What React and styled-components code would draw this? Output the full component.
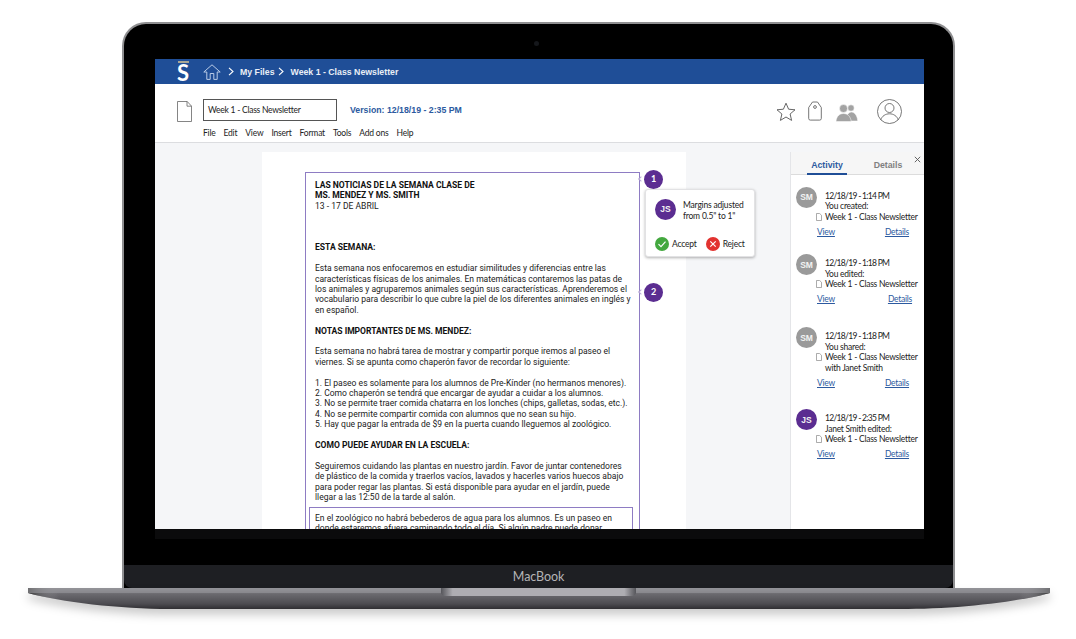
import styled, { createGlobalStyle } from "styled-components";

const GlobalStyle = createGlobalStyle`
  html, body {
    margin: 0;
    padding: 0;
    background: #fff;
  }
`;

const Stage = styled.div`
  width: 1076px;
  height: 639px;
  overflow: hidden;
  padding-top: 22px;
  box-sizing: border-box;
  font-family: Lato, "Liberation Sans", sans-serif;
  color: #222;
`;

const Lid = styled.div`
  width: 833px;
  height: 566px;
  margin-left: 122px;
  box-sizing: border-box;
  display: flex;
  flex-direction: column;
  background: #000;
  border: 2px solid #8f8f91;
  border-bottom: 0;
  border-radius: 24px 24px 0 0;
`;

const CameraRow = styled.div`
  height: 35px;
  display: flex;
  align-items: center;
  justify-content: center;
  flex: none;
`;

const Camera = styled.span`
  width: 5px;
  height: 5px;
  margin-left: -4px;
  margin-top: 3px;
  border-radius: 50%;
  background: #15171b;
`;

const Screen = styled.div`
  position: relative;
  width: 769px;
  height: 470px;
  margin-left: 31px;
  flex: none;
  overflow: hidden;
  display: flex;
  flex-direction: column;
  background: #f5f6f8;
`;

const BezelBand = styled.div`
  height: 10px;
  margin-left: 31px;
  width: 769px;
  flex: none;
  background: #0b0b0c;
`;

const Chin = styled.div`
  margin-top: 26px;
  flex: 1;
  display: flex;
  align-items: center;
  justify-content: center;
  background: #1e1f23;
  border-radius: 0 0 8px 8px;
  color: #b4b4b6;
  font-size: 12.5px;
  letter-spacing: -0.1px;
`;

const Base = styled.svg`
  display: block;
  margin-left: 28px;
  filter: drop-shadow(0 6px 5px rgba(0, 0, 0, 0.2));
`;

const TopBar = styled.div`
  height: 25px;
  flex: none;
  display: flex;
  align-items: center;
  background: #1f4e97;
  color: #e9eef6;
  font-family: "Liberation Sans", Arial, sans-serif;
  font-size: 8.75px;
  font-weight: 700;
`;

const Logo = styled.div`
  width: 16px;
  margin-left: 20px;
  display: flex;
  flex-direction: column;
  align-items: center;
  color: #fff;
  font-family: Lato, sans-serif;
  font-size: 22px;
  line-height: 19px;
  font-weight: 700;

  &::before {
    content: "";
    width: 11px;
    height: 2px;
    background: #a9a695;
  }
`;

const HomeLink = styled.span`
  display: flex;
  margin-left: 12px;
`;

const Crumb = styled.span`
  display: inline-flex;
  align-items: center;
  margin-left: ${(p) => p.$gap}px;
`;

const Header = styled.div`
  height: 59px;
  flex: none;
  box-sizing: border-box;
  display: flex;
  background: #fff;
  border-bottom: 1px solid #dcdde0;
  padding: 15px 22px 0 22px;
`;

const HeaderMain = styled.div`
  margin-left: 11px;
  flex: 1;
`;

const TitleRow = styled.div`
  display: flex;
  align-items: center;
`;

const TitleInput = styled.div`
  width: 134px;
  height: 22px;
  box-sizing: border-box;
  border: 1px solid #555;
  padding-left: 4px;
  display: flex;
  align-items: center;
  font-size: 8.5px;
  letter-spacing: -0.25px;
`;

const Version = styled.span`
  margin-left: 13px;
  color: #2c5aa0;
  font-family: "Liberation Sans", Arial, sans-serif;
  font-size: 8.75px;
  font-weight: 700;
`;

const MenuRow = styled.div`
  display: flex;
  gap: 8px;
  margin-top: 6px;
  font-size: 8.5px;
  line-height: 12px;
  letter-spacing: -0.2px;
`;

const HeaderIcons = styled.div`
  display: flex;
  align-items: flex-start;
`;

const IconSlot = styled.span`
  display: flex;
  margin-left: ${(p) => p.$gap}px;
  margin-top: ${(p) => p.$top}px;
`;

const DocIcon = styled.svg`
  flex: none;
  margin-top: 2px;
`;

const Workspace = styled.div`
  flex: 1;
  min-height: 0;
  display: flex;
  padding-top: 9px;
`;

const Sheet = styled.div`
  width: 424px;
  margin-left: 107px;
  box-sizing: border-box;
  background: #fff;
  padding: 20px 0 0 43px;
`;

const DocFrame = styled.div`
  position: relative;
  width: 335px;
  box-sizing: border-box;
  border: 1px solid #8e7cc3;
  padding: 7px 0 0 9px;
  font-family: Roboto, "Liberation Sans", sans-serif;
  font-size: 8.55px;
  line-height: 10.4px;
  color: #222;
  white-space: nowrap;
`;

const DocTitle = styled.div`
  font-weight: 700;
  color: #111;
`;

const DocText = styled.div`
  margin-bottom: ${(p) => (p.$blank || 1) * 10.4}px;
`;

const DocHeading = styled.div`
  font-weight: 700;
  color: #111;
  margin-bottom: 10.4px;
`;

const Suggestion = styled.div`
  margin: -6px 0 0 -6px;
  width: 324px;
  box-sizing: border-box;
  border: 1px solid #8e7cc3;
  padding: 5px 5px 20px;
`;

const Pin = styled.div`
  position: absolute;
  left: 338px;
  top: ${(p) => p.$top}px;
  width: 19px;
  height: 19px;
  border-radius: 50%;
  background: #5b2d91;
  color: #fff;
  font-family: Lato, sans-serif;
  font-size: 9px;
  font-weight: 700;
  display: flex;
  align-items: center;
  justify-content: center;

  &::before {
    content: "";
    position: absolute;
    left: -5px;
    top: 7px;
    width: 3px;
    height: 3px;
    border-left: 1px solid #b7a8d6;
    border-bottom: 1px solid #b7a8d6;
    transform: rotate(45deg);
  }
`;

const Popover = styled.div`
  position: absolute;
  left: 339px;
  top: 16px;
  width: 110px;
  height: 68px;
  box-sizing: border-box;
  background: #fff;
  border: 1px solid #e2e2e4;
  border-radius: 3px;
  box-shadow: 0 1px 3px rgba(0, 0, 0, 0.3);
  padding: 9px 9px 0;
  font-family: Lato, sans-serif;
  font-size: 8.5px;
  letter-spacing: -0.2px;
  line-height: 10.5px;
`;

const PopoverTop = styled.div`
  display: flex;
  align-items: flex-start;
  gap: 7px;
`;

const PopoverNote = styled.div`
  padding-top: 1px;
`;

const Avatar = styled.div`
  width: 21px;
  height: 21px;
  flex: none;
  border-radius: 50%;
  background: ${(p) => (p.$purple ? "#5b2d91" : "#9a9a9a")};
  color: #f2f2f2;
  font-family: "Liberation Sans", Arial, sans-serif;
  font-size: 8.5px;
  font-weight: 700;
  letter-spacing: 0;
  display: flex;
  align-items: center;
  justify-content: center;
`;

const PopoverActions = styled.div`
  display: flex;
  align-items: center;
  margin-top: 16px;
`;

const Action = styled.span`
  display: inline-flex;
  align-items: center;
  gap: 3px;
  margin-right: 9px;
`;

const Panel = styled.aside`
  width: 134px;
  margin-left: auto;
  flex: none;
  background: #fff;
  border-left: 1px solid #e4e5e8;
  box-sizing: border-box;
  position: relative;
`;

const Tabs = styled.div`
  height: 23px;
  box-sizing: border-box;
  display: flex;
  background: #f6f6f6;
  border-bottom: 1px solid #dcdcdc;
  padding-left: 16px;
  font-family: "Liberation Sans", Arial, sans-serif;
  font-size: 8.75px;
  font-weight: 700;
`;

const Tab = styled.div`
  width: 40px;
  margin-right: ${(p) => (p.$active ? 21 : 0)}px;
  text-align: center;
  line-height: 27px;
  height: 23px;
  box-sizing: border-box;
  color: ${(p) => (p.$active ? "#2c5aa0" : "#808080")};
  border-bottom: ${(p) => (p.$active ? "2px solid #1f4e97" : "0")};
`;

const CloseBtn = styled.span`
  position: absolute;
  right: 3px;
  top: 4px;
  display: flex;
`;

const Feed = styled.div`
  padding: 12px 0 0 5px;
  font-size: 8.5px;
  letter-spacing: -0.25px;
  line-height: 10.4px;
`;

const Entry = styled.div`
  display: flex;
  gap: 8px;
  margin-bottom: ${(p) => p.$after}px;
`;

const EntryBody = styled.div`
  white-space: nowrap;
  min-width: 0;
  padding-top: 4px;
`;

const EntryTime = styled.div`
  letter-spacing: -0.7px;
`;

const FileLine = styled.div`
  display: flex;
  align-items: center;
  gap: 3px;
  margin-left: -9px;
`;

const FileIcon = styled.svg`
  flex: none;
`;

const Links = styled.div`
  display: flex;
  margin: 3.5px 0 0 -8px;
  line-height: 12px;
  color: #2c5aa0;
  text-decoration: underline;
`;

const DetailsLink = styled.span`
  margin-left: ${(p) => p.$gap}px;
`;

const FileGlyph = () => (
  <FileIcon width="6" height="8" viewBox="0 0 6 8" fill="none" stroke="#888" strokeWidth="0.7">
    <path d="M.5.5h3.2l1.8 1.8v5.2h-5z" />
  </FileIcon>
);

const entries = [
  { who: "SM", time: "12/18/19 - 1:14 PM", action: "You created:", gap: 50, after: 16.5 },
  { who: "SM", time: "12/18/19 - 1:18 PM", action: "You edited:", gap: 53, after: 22.5 },
  { who: "SM", time: "12/18/19 - 1:18 PM", action: "You shared:", extra: "with Janet Smith", gap: 50, after: 20.9 },
  { who: "JS", time: "12/18/19 - 2:35 PM", action: "Janet Smith edited:", gap: 50, after: 0 },
];

const App = () => (
  <Stage>
    <GlobalStyle />
    <Lid>
      <CameraRow>
        <Camera />
      </CameraRow>
      <Screen>
        <TopBar>
          <Logo>S</Logo>
          <HomeLink>
            <svg width="18" height="16" viewBox="0 0 18 16" fill="none" stroke="#b9cbe6" strokeWidth="1">
              <path d="M.8 8 9 .8 17.2 8h-3v7.4h-3.4V9.5H7.2v5.9H3.8V8z" />
            </svg>
          </HomeLink>
          <Crumb $gap={7}>
            <svg width="6" height="9" viewBox="0 0 6 9" fill="none" stroke="#fff" strokeWidth="1.1">
              <path d="M1 .8 5 4.5 1 8.2" />
            </svg>
          </Crumb>
          <Crumb $gap={6}>My Files</Crumb>
          <Crumb $gap={3}>
            <svg width="6" height="9" viewBox="0 0 6 9" fill="none" stroke="#fff" strokeWidth="1.1">
              <path d="M1 .8 5 4.5 1 8.2" />
            </svg>
          </Crumb>
          <Crumb $gap={7}>Week 1 - Class Newsletter</Crumb>
        </TopBar>
        <Header>
          <DocIcon width="15" height="21" viewBox="0 0 15 21" fill="none" stroke="#666" strokeWidth="0.8">
            <path d="M.5.5h9.7l4.3 4.6v15.4H.5z" />
            <path d="M10 .5v4.7h4.5" />
          </DocIcon>
          <HeaderMain>
            <TitleRow>
              <TitleInput>Week 1 - Class Newsletter</TitleInput>
              <Version>Version: 12/18/19 - 2:35 PM</Version>
            </TitleRow>
            <MenuRow>
              <span>File</span>
              <span>Edit</span>
              <span>View</span>
              <span>Insert</span>
              <span>Format</span>
              <span>Tools</span>
              <span>Add ons</span>
              <span>Help</span>
            </MenuRow>
          </HeaderMain>
          <HeaderIcons>
            <IconSlot $gap={0} $top={3}>
              <svg width="20" height="20" viewBox="0 0 20 20" fill="none" stroke="#555" strokeWidth="0.9" strokeLinejoin="round">
                <path d="M10 1.2l2.6 6 6.4.6-4.9 4.2 1.5 6.4L10 15l-5.6 3.4L5.9 12 1 7.8l6.4-.6z" />
              </svg>
            </IconSlot>
            <IconSlot $gap={12} $top={2}>
              <svg width="14" height="20" viewBox="0 0 14 20" fill="none" stroke="#666" strokeWidth="0.9">
                <path d="M.7 6.500 4.500 1h5l3.800 5.500v11a1.600 1.600 0 0 1-1.600 1.600H2.300A1.600 1.600 0 0 1 .7 17.500z" />
                <circle cx="7" cy="6" r="1.400" />
              </svg>
            </IconSlot>
            <IconSlot $gap={14} $top={5}>
              <svg width="22" height="18" viewBox="0 0 22 18" fill="#a3a3a3" stroke="#fff" strokeWidth="0.5">
                <circle cx="15" cy="4" r="3.200" />
                <path d="M10 15c.3-4 3-7 5.500-7s5.800 3 6.200 9H12z" />
                <circle cx="7.500" cy="4.500" r="4" />
                <path d="M0 17.500c.3-5 3.500-8 7.500-8s7.200 3 7.700 8z" />
              </svg>
            </IconSlot>
            <IconSlot $gap={19} $top={0}>
              <svg width="25" height="25" viewBox="0 0 25 25" fill="none" stroke="#555" strokeWidth="0.8">
                <circle cx="12.500" cy="12.500" r="12" />
                <circle cx="12.500" cy="9" r="4.500" />
                <path d="M3.800 20.800c1.200-3.800 4.700-6 8.700-6s7.500 2.200 8.700 6" />
              </svg>
            </IconSlot>
          </HeaderIcons>
        </Header>
        <Workspace>
          <Sheet>
            <DocFrame>
              <DocTitle>LAS NOTICIAS DE LA SEMANA CLASE DE</DocTitle>
              <DocTitle>MS. MENDEZ Y MS. SMITH</DocTitle>
              <DocText $blank={3}>13 - 17 DE ABRIL</DocText>
              <DocHeading>ESTA SEMANA:</DocHeading>
              <DocText>
                Esta semana nos enfocaremos en estudiar similitudes y diferencias entre las
                <br />
                características físicas de los animales. En matemáticas contaremos las patas de
                <br />
                los animales y agruparemos animales según sus características. Aprenderemos el
                <br />
                vocabulario para describir lo que cubre la piel de los diferentes animales en inglés y
                <br />
                en español.
              </DocText>
              <DocHeading>NOTAS IMPORTANTES DE MS. MENDEZ:</DocHeading>
              <DocText>
                Esta semana no habrá tarea de mostrar y compartir porque iremos al paseo el
                <br />
                viernes. Si se apunta como chaperón favor de recordar lo siguiente:
              </DocText>
              <DocText>
                1. El paseo es solamente para los alumnos de Pre-Kínder (no hermanos menores).
                <br />
                2. Como chaperón se tendrá que encargar de ayudar a cuidar a los alumnos.
                <br />
                3. No se permite traer comida chatarra en los lonches (chips, galletas, sodas, etc.).
                <br />
                4. No se permite compartir comida con alumnos que no sean su hijo.
                <br />
                5. Hay que pagar la entrada de $9 en la puerta cuando lleguemos al zoológico.
              </DocText>
              <DocHeading>COMO PUEDE AYUDAR EN LA ESCUELA:</DocHeading>
              <DocText>
                Seguiremos cuidando las plantas en nuestro jardín. Favor de juntar contenedores
                <br />
                de plástico de la comida y traerlos vacíos, lavados y hacerles varios huecos abajo
                <br />
                para poder regar las plantas. Si está disponible para ayudar en el jardín, puede
                <br />
                llegar a las 12:50 de la tarde al salón.
              </DocText>
              <Suggestion>
                En el zoológico no habrá bebederos de agua para los alumnos. Es un paseo en
                <br />
                donde estaremos afuera caminando todo el día. Si algún padre puede donar
              </Suggestion>
              <Pin $top={-3}>1</Pin>
              <Pin $top={110}>2</Pin>
              <Popover>
                <PopoverTop>
                  <Avatar $purple>JS</Avatar>
                  <PopoverNote>
                    Margins adjusted
                    <br />
                    from 0.5" to 1"
                  </PopoverNote>
                </PopoverTop>
                <PopoverActions>
                  <Action>
                    <svg width="14" height="14" viewBox="0 0 14 14">
                      <circle cx="7" cy="7" r="7" fill="#43a83f" />
                      <path d="M3.500 7.200 6 9.700l4.500-5" fill="none" stroke="#fff" strokeWidth="1.200" />
                    </svg>
                    Accept
                  </Action>
                  <Action>
                    <svg width="14" height="14" viewBox="0 0 14 14">
                      <circle cx="7" cy="7" r="7" fill="#e2322f" />
                      <path d="M4.300 4.300l5.400 5.400M9.700 4.300l-5.400 5.400" fill="none" stroke="#fff" strokeWidth="1.200" />
                    </svg>
                    Reject
                  </Action>
                </PopoverActions>
              </Popover>
            </DocFrame>
          </Sheet>
          <Panel>
            <Tabs>
              <Tab $active>Activity</Tab>
              <Tab>Details</Tab>
            </Tabs>
            <CloseBtn>
              <svg width="7" height="7" viewBox="0 0 7 7" stroke="#555" strokeWidth="0.9">
                <path d="M.8.800l5.400 5.400M6.200.800.800 6.200" />
              </svg>
            </CloseBtn>
            <Feed>
              {entries.map((entry) => (
                <Entry key={entry.time + entry.action} $after={entry.after}>
                  <Avatar $purple={entry.who === "JS"}>{entry.who}</Avatar>
                  <EntryBody>
                    <EntryTime>{entry.time}</EntryTime>
                    <div>{entry.action}</div>
                    <FileLine>
                      <FileGlyph />
                      Week 1 - Class Newsletter
                    </FileLine>
                    {entry.extra ? <div>{entry.extra}</div> : null}
                    <Links>
                      <span>View</span>
                      <DetailsLink $gap={entry.gap}>Details</DetailsLink>
                    </Links>
                  </EntryBody>
                </Entry>
              ))}
            </Feed>
          </Panel>
        </Workspace>
      </Screen>
      <BezelBand />
      <Chin>MacBook</Chin>
    </Lid>
    <Base width="1022" height="22" viewBox="0 0 1022 22">
      <defs>
        <linearGradient id="baseFill" x1="0" y1="0" x2="0" y2="1">
          <stop offset="0" stopColor="#8e8d92" />
          <stop offset="0.3" stopColor="#6a696e" />
          <stop offset="0.75" stopColor="#4d4c51" />
          <stop offset="1" stopColor="#2f2e32" />
        </linearGradient>
        <linearGradient id="baseEnds" x1="0" y1="0" x2="1" y2="0">
          <stop offset="0" stopColor="#333" />
          <stop offset="0.03" stopColor="#a4a3a8" stopOpacity="0" />
          <stop offset="0.97" stopColor="#a4a3a8" stopOpacity="0" />
          <stop offset="1" stopColor="#333" />
        </linearGradient>
        <linearGradient id="notch" x1="0" y1="0" x2="1" y2="0">
          <stop offset="0" stopColor="#55555a" />
          <stop offset="0.06" stopColor="#aeadb2" />
          <stop offset="0.94" stopColor="#aeadb2" />
          <stop offset="1" stopColor="#55555a" />
        </linearGradient>
      </defs>
      <path d="M0 0H1022V5C990 14 930 21 880 21H142C92 21 32 14 0 5z" fill="url(#baseFill)" />
      <path d="M0 0H1022V5C990 14 930 21 880 21H142C92 21 32 14 0 5z" fill="url(#baseEnds)" />
      <rect y="0" width="1022" height="5" fill="#98979c" opacity="0.6" />
      <path d="M413 0H608V4C608 7 606 8 603 8H418C415 8 413 7 413 4z" fill="url(#notch)" />
    </Base>
  </Stage>
);

export default App;
